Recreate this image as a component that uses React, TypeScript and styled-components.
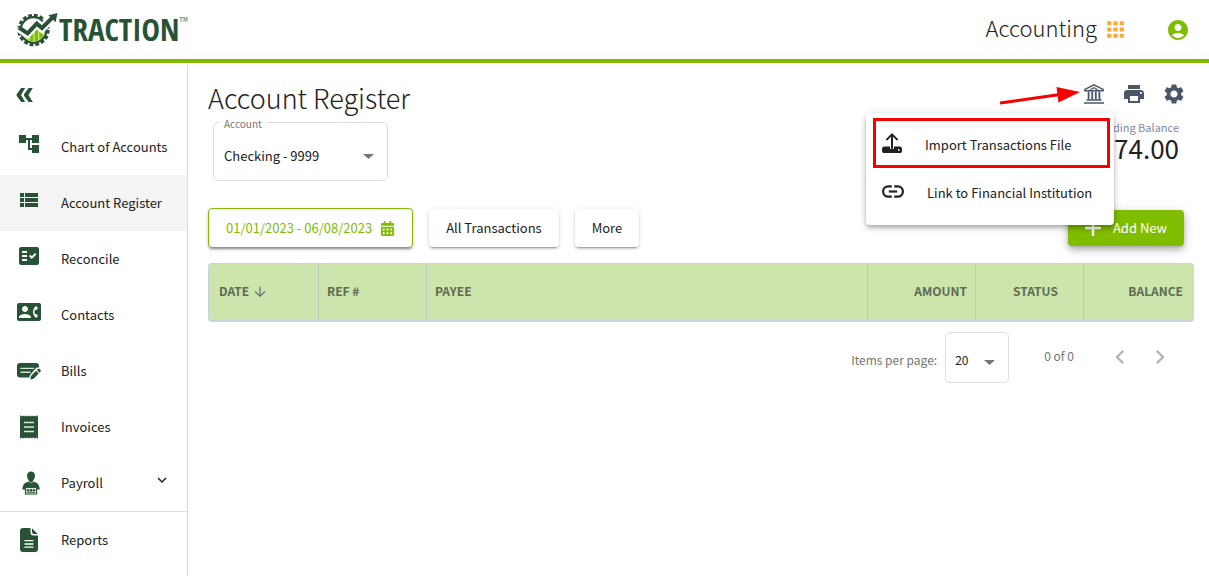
import React from "react";
import styled, { createGlobalStyle, css } from "styled-components";
import {
  MdAccountCircle,
  MdAccountTree,
  MdApps,
  MdArrowDownward,
  MdChevronLeft,
  MdChevronRight,
  MdContactPhone,
  MdExpandMore,
  MdFactCheck,
  MdPrint,
  MdSettings,
  MdViewList,
} from "react-icons/md";
import { FaCalendarAlt } from "react-icons/fa";

const GlobalStyle = createGlobalStyle`
  *, *::before, *::after { box-sizing: border-box; }
  body {
    margin: 0;
    background: #fff;
    color: #212121;
    font-family: "Noto Sans CJK SC", "Noto Sans", sans-serif;
    font-size: 13px;
    line-height: 20px;
  }
  button, select { font: inherit; color: inherit; }
  button { border: 0; padding: 0; background: none; cursor: pointer; }
  svg { display: block; flex: none; }
`;

const green = "#80bc00";
const forest = "#285235";
const slate = "#4a5568";

const Page = styled.div`
  min-height: 100vh;
  display: flex;
  flex-direction: column;
`;

const TopBar = styled.header`
  height: 63px;
  display: flex;
  align-items: center;
  justify-content: space-between;
  padding: 0 19px 0 16px;
  border-bottom: 4px solid ${green};
`;

const Brand = styled.a`
  display: flex;
  align-items: center;
  color: ${forest};
  text-decoration: none;
`;

const BrandName = styled.span`
  font-family: "Open Sans Condensed", "Roboto Condensed", Roboto, sans-serif;
  font-weight: 700;
  font-size: 31px;
  line-height: 32px;
  padding-bottom: 2px;
`;

const TradeMark = styled.span`
  align-self: flex-start;
  font-size: 6px;
  line-height: 8px;
  padding-top: 4px;
`;

const TopActions = styled.div`
  display: flex;
  align-items: center;
`;

const AppSwitcher = styled.button`
  display: flex;
  align-items: center;
  gap: 6px;
  margin-right: 38px;
  font-size: 22px;
  line-height: 28px;
  font-weight: 300;
  span { padding-bottom: 6px; }
  svg { color: #ffa733; }
`;

const AccountButton = styled.button`
  color: ${green};
`;

const Body = styled.div`
  flex: 1;
  display: flex;
`;

const Sidebar = styled.nav`
  flex: none;
  width: 188px;
  border-right: 1px solid #dcdcdc;
`;

const Collapse = styled.button`
  display: flex;
  align-items: center;
  width: 100%;
  height: 56px;
  padding: 8px 16px 0;
  color: ${forest};
`;

const NavItem = styled.a<{ $active?: boolean; $divided?: boolean }>`
  display: flex;
  align-items: center;
  height: 56px;
  padding: 0 16px 0 17px;
  color: inherit;
  text-decoration: none;
  background: ${(p) => (p.$active ? "#f4f4f4" : "none")};
  ${(p) =>
    p.$divided &&
    css`
      height: 57px;
      border-bottom: 1px solid #dcdcdc;
    `}
`;

const NavIcon = styled.span<{ $raised?: boolean }>`
  flex: none;
  display: flex;
  justify-content: center;
  width: 24px;
  margin-right: 20px;
  padding-bottom: ${(p) => (p.$raised ? 6 : 0)}px;
  color: ${forest};
`;

const NavLabel = styled.span`
  flex: 1;
  white-space: nowrap;
`;

const NavChevron = styled(MdExpandMore)`
  margin-bottom: 6px;
`;

const Main = styled.main`
  flex: 1;
  min-width: 0;
  padding: 16px 15px 16px 20px;
`;

const PageHead = styled.div`
  display: flex;
  justify-content: space-between;
  align-items: flex-start;
`;

const Title = styled.h1`
  margin: 0;
  font-size: 27px;
  line-height: 38px;
  font-weight: 300;
`;

const AccountField = styled.div`
  position: relative;
  width: 175px;
  margin: 5px 0 0 5px;
`;

const FieldLabel = styled.label`
  position: absolute;
  top: -5px;
  left: 6px;
  padding: 0 5px;
  background: #fff;
  color: #757575;
  font-size: 10px;
  line-height: 14px;
`;

const SelectBox = styled.span<{ $compact?: boolean }>`
  display: grid;
  align-items: center;
  border: 1px solid #dedede;
  border-radius: 5px;
  width: ${(p) => (p.$compact ? "64px" : "100%")};
  height: ${(p) => (p.$compact ? 51 : 59)}px;
  font-size: ${(p) => (p.$compact ? 12 : 13)}px;
  select,
  svg { grid-area: 1 / 1; }
  select {
    appearance: none;
    border: 0;
    background: none;
    width: 100%;
    height: 100%;
    padding: ${(p) => (p.$compact ? "5px 24px 0 9px" : "8px 30px 0 10px")};
  }
  svg {
    justify-self: end;
    margin-right: 13px;
    margin-top: 9px;
    color: #757575;
    pointer-events: none;
  }
`;

const Summary = styled.div`
  display: flex;
  flex-direction: column;
  align-items: flex-end;
`;

const Tools = styled.div`
  display: flex;
`;

const ToolSlot = styled.div`
  position: relative;
`;

const ToolButton = styled.button`
  display: flex;
  align-items: center;
  justify-content: center;
  width: 40px;
  height: 30px;
  color: ${slate};
`;

const BalanceLabel = styled.span`
  margin: 10px 15px 0 0;
  color: #7d89a6;
  font-size: 11px;
  line-height: 16px;
`;

const BalanceValue = styled.span`
  margin-right: 15px;
  font-size: 26px;
  line-height: 26px;
`;

const Menu = styled.div`
  position: absolute;
  z-index: 2;
  top: 34px;
  right: 0;
  width: 248px;
  padding: 8px 0;
  background: #fff;
  border-radius: 4px;
  box-shadow: 0 2px 4px -1px rgba(0, 0, 0, 0.2), 0 4px 5px rgba(0, 0, 0, 0.14),
    0 1px 10px rgba(0, 0, 0, 0.12);
`;

const MenuItem = styled.button`
  display: flex;
  align-items: center;
  width: 100%;
  height: 48px;
  padding: 0 16px;
  white-space: nowrap;
  span {
    flex: 1;
    text-align: left;
  }
`;

const MenuIcon = styled.i<{ $wide?: boolean }>`
  width: ${(p) => (p.$wide ? 45 : 43)}px;
  padding-bottom: 4px;
`;

const Highlight = styled.div`
  position: absolute;
  inset: 5px 4px auto 7px;
  height: 50px;
  border: 3px solid #f60000;
  pointer-events: none;
`;

const Pointer = styled.svg`
  position: absolute;
  top: 4px;
  right: 32px;
`;

const Filters = styled.div`
  display: flex;
  align-items: center;
  gap: 16px;
  margin-top: 27px;
`;

const FilterButton = styled.button<{ $outlined?: boolean }>`
  display: flex;
  align-items: center;
  gap: 8px;
  height: 38px;
  padding: 0 17px;
  border-radius: 4px;
  background: #fff;
  box-shadow: 0 3px 1px -2px rgba(0, 0, 0, 0.2), 0 2px 2px rgba(0, 0, 0, 0.14),
    0 1px 5px rgba(0, 0, 0, 0.12);
  ${(p) =>
    p.$outlined &&
    css`
      height: 40px;
      border: 1px solid ${green};
      color: ${green};
    `}
`;

const AddButton = styled.button`
  display: flex;
  align-items: center;
  gap: 12px;
  height: 36px;
  margin: 0 10px 0 auto;
  padding: 0 17px;
  border-radius: 4px;
  background: ${green};
  color: #fff;
  box-shadow: 0 3px 5px -1px rgba(0, 0, 0, 0.2), 0 5px 8px rgba(0, 0, 0, 0.14),
    0 1px 12px rgba(0, 0, 0, 0.12);
`;

const RegisterTable = styled.table`
  width: 100%;
  margin-top: 15px;
  table-layout: fixed;
  border-collapse: separate;
  border-spacing: 0;
  border: 1px solid #c8d4e0;
  border-bottom-width: 2px;
  border-radius: 4px;
  background: #cde5ac;
`;

const HeadCell = styled.th<{ $align?: string; $width?: number }>`
  width: ${(p) => (p.$width ? `${p.$width}px` : "auto")};
  height: 56px;
  padding: 0 8px 2px ${(p) => (p.$align === "center" ? 20 : 8)}px;
  text-align: ${(p) => p.$align ?? "left"};
  color: #5f6b52;
  font-size: 12px;
  font-weight: 700;
  &:first-child { padding-left: 10px; }
  &:last-child { padding-right: 10px; }
  & + & { border-left: 1px solid #c0c8c4; }
`;

const SortLabel = styled.span`
  display: flex;
  align-items: center;
  gap: 3px;
  svg {
    margin-top: 2px;
    color: #757575;
    stroke: currentColor;
  }
`;

const Pager = styled.div`
  display: flex;
  align-items: center;
  justify-content: flex-end;
  margin: 10px 14px 0 0;
  color: #757575;
  font-size: 12px;
`;

const PagerSize = styled.div`
  display: flex;
  align-items: center;
  gap: 8px;
  label { padding-top: 4px; }
  select { color: #212121; }
`;

const PagerRange = styled.span`
  margin: 0 26px 0 35px;
  padding-bottom: 4px;
`;

const PagerButton = styled.button`
  display: flex;
  align-items: center;
  justify-content: center;
  width: 40px;
  height: 40px;
  padding-bottom: 2px;
  color: #b4b4b4;
`;

function LogoMark() {
  const bars = [
    [5, 20, 3],
    [8.8, 23, 4],
    [13.6, 21, 4],
    [18.4, 16, 4],
    [23.2, 18, 4],
    [28, 16, 3],
  ];
  return (
    <svg width="43" height="36" viewBox="0 0 43 36" aria-hidden="true">
      <clipPath id="dial">
        <circle cx="17.5" cy="18" r="11.4" />
      </clipPath>
      <circle cx="17.5" cy="18" r="14.6" fill="none" stroke={forest} strokeWidth="3.2" strokeDasharray="3.8 1.93" />
      <circle cx="17.5" cy="18" r="12.8" fill="#fff" stroke={forest} strokeWidth="2.2" />
      <g clipPath="url(#dial)">
        {bars.map(([x, y, w]) => (
          <rect key={x} x={x} y={y} width={w} height="16" fill={green} />
        ))}
      </g>
      <path d="M26 10L32 4L37 9L30.5 17Z" fill="#fff" />
      <path d="M1 17L11.5 24L20.8 14L26 18.6L36 8" fill="none" stroke="#fff" strokeWidth="5" />
      <path d="M3 15.5L11.6 21.4L20.8 11.6L26 16L37 5" fill="none" stroke={forest} strokeWidth="4" />
      <path d="M41.5 1L32.4 3.2L39.6 10.2Z" fill={forest} />
    </svg>
  );
}

function CollapseIcon() {
  return (
    <svg width="17" height="14" viewBox="0 0 17 14" fill="currentColor" aria-hidden="true">
      <path d="M5.2 0H9.2L5 7L9.2 14H5.2L.6 7.8V6.2Z" />
      <path d="M12.6 0H16.8L12.4 7L16.8 14H12.6L8 7.8V6.2Z" />
    </svg>
  );
}

function BillIcon() {
  return (
    <svg width="24" height="18" viewBox="0 0 24 18" aria-hidden="true">
      <rect x="0" y="1" width="22" height="14.5" rx="3" fill={forest} />
      <path d="M4 6.4H16.5M4 10.2H13" stroke="#d5e2d6" strokeWidth="1.4" strokeLinecap="round" />
      <path d="M11.5 18L13 13L19.5 5.5L24 5.5V16H17Z" fill="#fff" />
      <path d="M13.2 17.6L14 14L19 8.8L21.8 11.6L16.6 16.7Z" fill={forest} />
      <path d="M19.8 8L21 6.9Q21.8 6.3 22.6 7L23.6 8Q24.2 8.8 23.5 9.6L22.5 10.7Z" fill={forest} />
    </svg>
  );
}

function InvoiceIcon() {
  return (
    <svg width="18" height="24" viewBox="0 0 18 24" aria-hidden="true">
      <path
        d="M0 0L1.5 1.6L3 .4L4.5 1.6L6 .4L7.5 1.6L9 .4L10.5 1.6L12 .4L13.5 1.6L15 .4L16.5 1.6L18 0V24L16.5 22.4L15 23.6L13.5 22.4L12 23.6L10.5 22.4L9 23.6L7.5 22.4L6 23.6L4.5 22.4L3 23.6L1.5 22.4L0 24Z"
        fill={forest}
      />
      <path d="M4 7.5H14M4 12H14M4 16.5H14" stroke="#dfe8e0" strokeWidth="1.6" />
    </svg>
  );
}

function PayrollIcon() {
  return (
    <svg width="22" height="24" viewBox="-4 0 22 24" aria-hidden="true">
      <path d="M9 .5C6.6.5 5 2.2 5 4.6C5 7 6.2 9 7.2 9.9V11.6H10.8V9.9C11.8 9 13 7 13 4.6C13 2.2 11.4.5 9 .5Z" fill={forest} />
      <path d="M6.4 10.8Q9 13.6 11.6 10.8Q15.2 11.6 16.4 13.6Q17.4 15.6 17.8 18.6H14.8V16H3.2V18.6H.2Q.6 15.6 1.6 13.6Q2.8 11.6 6.4 10.8Z" fill={forest} />
      <rect x="3.4" y="16.6" width="11.2" height="6.4" fill="#fff" stroke={forest} strokeWidth="1.1" />
      <path d="M4.6 18.2H7.4V20.6H4.6ZM10.6 18.2H13.4V20.6H10.6ZM4.6 21.2H13.4V22H4.6Z" fill={forest} />
      <circle cx="9" cy="19.4" r="1.3" fill={forest} />
    </svg>
  );
}

function ReportIcon() {
  return (
    <svg width="18" height="24" viewBox="0 0 18 24" aria-hidden="true">
      <path d="M3 0H10.5V4.5Q10.5 7.5 13.5 7.5H18V21Q18 24 15 24H3Q0 24 0 21V3Q0 0 3 0Z" fill={forest} />
      <path d="M12 .3L17.7 6H14Q12 6 12 4Z" fill={forest} />
      <path d="M4.5 12.7H13.5M4.5 16H13.5M4.5 19.2H13.5" stroke="#fff" strokeWidth="1.3" />
    </svg>
  );
}

function BankIcon() {
  return (
    <svg width="20" height="20" viewBox="0 0 20 20" fill="none" stroke="currentColor" aria-hidden="true">
      <path d="M.9 6.7V5.4L10 .9L19.1 5.4V6.7Z" strokeWidth="1.6" />
      <path d="M6.4 5.8L10 3.8L13.6 5.8" strokeWidth="1.2" />
      <path d="M4.6 7.5V15.5M8.2 7.5V15.5M11.8 7.5V15.5M15.4 7.5V15.5" strokeWidth="1.8" />
      <path d="M2.5 16H17.5M0 19H20" strokeWidth="1.6" />
    </svg>
  );
}

function UploadIcon() {
  return (
    <svg width="20" height="20" viewBox="0 0 20 20" aria-hidden="true">
      <path d="M10 15V2M5 6.4L10 1.4L15 6.4" fill="none" stroke="#212121" strokeWidth="2" strokeLinecap="round" strokeLinejoin="round" />
      <path d="M2.5 13.6H8V15Q8 16 9 16H11Q12 16 12 15V13.6H17.5Q20 13.6 20 16V17.4Q20 20 17.5 20H2.5Q0 20 0 17.4V16Q0 13.6 2.5 13.6Z" fill="#212121" />
      <circle cx="16.8" cy="17" r="0.9" fill="#fff" />
    </svg>
  );
}

function LinkIcon() {
  return (
    <svg width="22" height="13" viewBox="0 0 22 13" fill="none" stroke="#212121" strokeWidth="2.2" aria-hidden="true">
      <path d="M9.8 1.3H6.3A5.2 5.2 0 0 0 6.3 11.7H9.8M12.2 1.3H15.7A5.2 5.2 0 0 1 15.7 11.7H12.2" />
      <path d="M6.8 6.5H15.2" />
    </svg>
  );
}

function PlusIcon() {
  return (
    <svg width="16" height="16" viewBox="0 0 16 16" stroke="#fff" strokeWidth="2.4" strokeLinecap="round" aria-hidden="true">
      <path d="M8 1V15M1 8H15" />
    </svg>
  );
}

function Caret() {
  return (
    <svg width="11" height="5" viewBox="0 0 11 5" fill="currentColor" aria-hidden="true">
      <path d="M0 0H11L5.5 5Z" />
    </svg>
  );
}

const navItems: {
  label: string;
  icon: React.ReactNode;
  raised?: boolean;
  active?: boolean;
  expandable?: boolean;
}[] = [
  { label: "Chart of Accounts", icon: <MdAccountTree size={24} />, raised: true },
  { label: "Account Register", icon: <MdViewList size={24} />, raised: true, active: true },
  { label: "Reconcile", icon: <MdFactCheck size={24} />, raised: true },
  { label: "Contacts", icon: <MdContactPhone size={24} />, raised: true },
  { label: "Bills", icon: <BillIcon /> },
  { label: "Invoices", icon: <InvoiceIcon /> },
  { label: "Payroll", icon: <PayrollIcon />, expandable: true },
  { label: "Reports", icon: <ReportIcon /> },
];

export default function App() {
  return (
    <Page>
      <GlobalStyle />
      <TopBar>
        <Brand href="#">
          <LogoMark />
          <BrandName>TRACTION</BrandName>
          <TradeMark>TM</TradeMark>
        </Brand>
        <TopActions>
          <AppSwitcher>
            <span>Accounting</span>
            <MdApps size={25} />
          </AppSwitcher>
          <AccountButton aria-label="Account">
            <MdAccountCircle size={24} />
          </AccountButton>
        </TopActions>
      </TopBar>
      <Body>
        <Sidebar>
          <Collapse aria-label="Collapse menu">
            <CollapseIcon />
          </Collapse>
          {navItems.map((item) => (
            <NavItem key={item.label} href="#" $active={item.active} $divided={item.expandable}>
              <NavIcon $raised={item.raised}>{item.icon}</NavIcon>
              <NavLabel>{item.label}</NavLabel>
              {item.expandable && <NavChevron size={18} />}
            </NavItem>
          ))}
        </Sidebar>
        <Main>
          <PageHead>
            <div>
              <Title>Account Register</Title>
              <AccountField>
                <SelectBox>
                  <select id="account">
                    <option>Checking - 9999</option>
                  </select>
                  <Caret />
                </SelectBox>
                <FieldLabel htmlFor="account">Account</FieldLabel>
              </AccountField>
            </div>
            <Summary>
              <Tools>
                <ToolSlot>
                  <ToolButton aria-label="Bank">
                    <BankIcon />
                  </ToolButton>
                  <Pointer width="82" height="22" viewBox="0 0 82 22" aria-hidden="true">
                    <path d="M0 20L60 11.5" stroke="#f60000" strokeWidth="3" />
                    <path d="M80 9L56.5 4L58.5 19.5Z" fill="#f60000" />
                  </Pointer>
                  <Menu>
                    <MenuItem>
                      <MenuIcon>
                        <UploadIcon />
                      </MenuIcon>
                      <span>Import Transactions File</span>
                    </MenuItem>
                    <MenuItem>
                      <MenuIcon $wide>
                        <LinkIcon />
                      </MenuIcon>
                      <span>Link to Financial Institution</span>
                    </MenuItem>
                    <Highlight />
                  </Menu>
                </ToolSlot>
                <ToolButton aria-label="Print">
                  <MdPrint size={24} />
                </ToolButton>
                <ToolButton aria-label="Settings">
                  <MdSettings size={24} />
                </ToolButton>
              </Tools>
              <BalanceLabel>Ending Balance</BalanceLabel>
              <BalanceValue>74.00</BalanceValue>
            </Summary>
          </PageHead>
          <Filters>
            <FilterButton $outlined>
              <span>01/01/2023 - 06/08/2023</span>
              <FaCalendarAlt size={15} />
            </FilterButton>
            <FilterButton>
              <span>All Transactions</span>
            </FilterButton>
            <FilterButton>
              <span>More</span>
            </FilterButton>
            <AddButton>
              <PlusIcon />
              <span>Add New</span>
            </AddButton>
          </Filters>
          <RegisterTable>
            <thead>
              <tr>
                <HeadCell $width={109}>
                  <SortLabel>
                    DATE
                    <MdArrowDownward size={16} />
                  </SortLabel>
                </HeadCell>
                <HeadCell $width={108}>REF #</HeadCell>
                <HeadCell>PAYEE</HeadCell>
                <HeadCell $width={108} $align="right">AMOUNT</HeadCell>
                <HeadCell $width={108} $align="center">STATUS</HeadCell>
                <HeadCell $width={110} $align="right">BALANCE</HeadCell>
              </tr>
            </thead>
          </RegisterTable>
          <Pager>
            <PagerSize>
              <label htmlFor="page-size">Items per page:</label>
              <SelectBox $compact>
                <select id="page-size">
                  <option>20</option>
                </select>
                <Caret />
              </SelectBox>
            </PagerSize>
            <PagerRange>0 of 0</PagerRange>
            <PagerButton aria-label="Previous page">
              <MdChevronLeft size={28} />
            </PagerButton>
            <PagerButton aria-label="Next page">
              <MdChevronRight size={28} />
            </PagerButton>
          </Pager>
        </Main>
      </Body>
    </Page>
  );
}
